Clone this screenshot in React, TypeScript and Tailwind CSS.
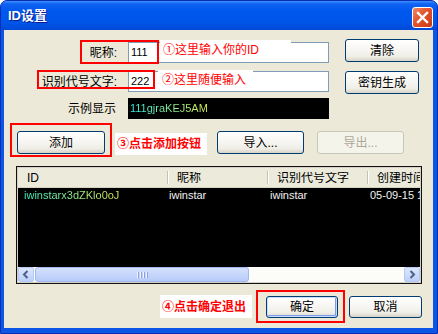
const FONT = "font-['Liberation_Sans','Noto_Sans_CJK_SC',sans-serif]";

type BtnProps = {
  label: string;
  className?: string;
  disabled?: boolean;
  isDefault?: boolean;
};

const XpButton = ({ label, className = '', disabled = false, isDefault = false }: BtnProps) => {
  const look = disabled
    ? 'border-[#C9C7BA] bg-[#F5F4EA] text-[#ACA899]'
    : 'border-[#003C74] text-black bg-[linear-gradient(to_bottom,#FFFFFF_0%,#F7F6F2_45%,#EEEDE6_80%,#D8D2C6_100%)]';
  const ring = isDefault ? 'shadow-[inset_0_0_0_1px_#C9DCFB,inset_-1px_-1px_0_1px_#7D9BEA]' : '';
  return (
    <div className={`flex items-center justify-center rounded-[3px] border text-[12px] leading-none ${look} ${ring} ${className}`}>
      {label}
    </div>
  );
};

// red call-out frame drawn over the form
const RedFrame = ({ className }: { className: string }) => (
  <div className={`absolute border-2 border-[#FF0000] pointer-events-none ${className}`} />
);

const Note = ({ text, bold = false, className }: { text: string; bold?: boolean; className: string }) => (
  <div className={`absolute flex items-center bg-white text-[12px] leading-none text-[#FF0000] whitespace-nowrap ${bold ? 'font-bold' : ''} ${className}`}>
    {text}
  </div>
);

const ScrollBtn = ({ dir }: { dir: 'left' | 'right' }) => (
  <div className="w-[16px] h-full rounded-[2px] border border-[#B4C8F6] bg-[linear-gradient(to_bottom,#DCE6FE,#BDCFFA)] flex items-center justify-center">
    <svg width="8" height="9" viewBox="0 0 8 9">
      {dir === 'left' ? (
        <path d="M5.5 1 L2 4.5 L5.5 8" fill="none" stroke="#4D6185" strokeWidth="2" />
      ) : (
        <path d="M2.5 1 L6 4.5 L2.5 8" fill="none" stroke="#4D6185" strokeWidth="2" />
      )}
    </svg>
  </div>
);

const HeaderCell = ({ text, w, last = false }: { text: string; w: string; last?: boolean }) => (
  <div className={`flex items-center h-full shrink-0 ${w}`}>
    <span className="flex-1 pl-[9px] text-[12px] leading-none whitespace-nowrap overflow-hidden">{text}</span>
    {!last && <span className="w-[1px] h-[13px] bg-[#C5C2B2] shadow-[1px_0_0_#FFFFFF]" />}
  </div>
);

export default function App() {
  return (
    <div className={`w-[438px] h-[334px] bg-white ${FONT}`}>
      <div className="w-full h-full flex flex-col rounded-t-[7px] border border-[#0A2DB3] bg-[#0C56E6]">
        {/* title bar */}
        <div className="h-[29px] flex items-start justify-between rounded-t-[6px] bg-[linear-gradient(to_bottom,#3E93FF_0%,#0F62F2_10%,#0058EE_35%,#0055E8_75%,#0048D6_100%)]">
          <span className="mt-[8px] ml-[7px] text-[13px] font-bold leading-none text-white [text-shadow:1px_1px_0_#0A1A8C]">
            ID设置
          </span>
          <div className="mt-[6px] mr-[4px] w-[21px] h-[21px] rounded-[3px] border border-white bg-[linear-gradient(135deg,#F08A68_0%,#E2522B_45%,#C53B16_100%)] flex items-center justify-center">
            <svg width="13" height="13" viewBox="0 0 13 13">
              <path d="M2 2 L11 11 M11 2 L2 11" stroke="white" strokeWidth="2.4" strokeLinecap="square" />
            </svg>
          </div>
        </div>

        {/* body */}
        <div className="ml-[3px] mr-[4px] h-[298px] bg-[#ECE9D8] flex flex-col text-black">
          <div className="flex items-start">
            <div className="w-[325px] flex flex-col">
              <div className="relative mt-[12px] h-[21px] flex items-center">
                <span className="w-[116px] pr-[3px] text-right text-[12px] leading-none">昵称:</span>
                <div className="ml-[8px] w-[201px] h-full border border-[#7F9DB9] bg-white flex items-center pl-[2px] text-[11px]">111</div>
                <RedFrame className="left-[76px] top-[-2px] w-[79px] h-[24px]" />
                <Note text="①这里输入你的ID" className="left-[156px] top-[-2px] w-[131px] h-[20px] pl-[3px]" />
              </div>
              <div className="relative mt-[8px] h-[21px] flex items-center">
                <span className="w-[116px] pr-[3px] text-right text-[12px] leading-none">识别代号文字:</span>
                <div className="ml-[8px] w-[201px] h-full border border-[#7F9DB9] bg-white flex items-center pl-[2px] text-[11px]">222</div>
                <RedFrame className="left-[33px] top-[-1px] w-[118px] h-[19px]" />
                <Note text="②这里随便输入" className="left-[154px] top-[-1px] w-[95px] h-[20px] pl-[4px]" />
              </div>
              <div className="mt-[6px] h-[21px] flex items-center">
                <span className="w-[116px] pr-[4px] text-right text-[12px] leading-none">示例显示</span>
                <div className="ml-[8px] w-[201px] h-full bg-black flex items-center pl-[2px] text-[11px]">
                  <span className="bg-[linear-gradient(to_right,#2EF2EA,#DDF04C)] bg-clip-text text-transparent">111gjraKEJ5AM</span>
                </div>
              </div>
            </div>
            <div className="ml-[16px] flex flex-col">
              <XpButton label="清除" className="mt-[9px] w-[74px] h-[23px]" />
              <XpButton label="密钥生成" className="mt-[9px] w-[74px] h-[23px]" />
            </div>
          </div>

          <div className="relative mt-[12px] h-[23px] flex pl-[13px]">
            <XpButton label="添加" className="w-[88px] h-full" />
            <XpButton label="导入..." className="ml-[112px] w-[87px] h-full" />
            <XpButton label="导出..." disabled className="ml-[13px] w-[87px] h-full" />
            <RedFrame className="left-[6px] top-[-8px] w-[102px] h-[34px]" />
            <Note text="③点击添加按钮" bold className="left-[111px] top-[2px] w-[92px] h-[22px] pl-[2px]" />
          </div>

          {/* list view */}
          <div className="mt-[12px] ml-[12px] w-[406px] h-[118px] border border-[#111111] bg-black">
            <div className="w-full h-full border border-[#D4D0C8] flex flex-col overflow-hidden">
              <div className="h-[20px] shrink-0 flex bg-[#EBEADB] border-b border-[#D6D2C2]">
                <HeaderCell text="ID" w="w-[150px]" />
                <HeaderCell text="昵称" w="w-[100px]" />
                <HeaderCell text="识别代号文字" w="w-[100px]" />
                <HeaderCell text="创建时间" w="w-[52px]" last />
              </div>
              <div className="flex-1 bg-black text-[11px] leading-none">
                <div className="h-[15px] flex items-center whitespace-nowrap">
                  <div className="w-[150px] pl-[6px]">
                    <span className="bg-[linear-gradient(to_right,#3CF8C8,#E4EE58)] bg-clip-text text-transparent">iwinstarx3dZKlo0oJ</span>
                  </div>
                  <div className="w-[100px] pl-[1px] text-[#F2F2F2]">iwinstar</div>
                  <div className="w-[100px] pl-[2px] text-[#F2F2F2]">iwinstar</div>
                  <div className="w-[52px] pl-[2px] text-[#F2F2F2] overflow-hidden">05-09-15 13:20</div>
                </div>
              </div>
              <div className="h-[15px] shrink-0 flex bg-[#FCFCF9]">
                <ScrollBtn dir="left" />
                <div className="ml-[1px] w-[214px] h-full rounded-[3px] border border-[#9FB6EE] bg-[linear-gradient(to_bottom,#D4E1FE,#B8CBF8)] flex items-center justify-center gap-[1px]">
                  <span className="w-[1px] h-[6px] bg-[#EEF3FF] shadow-[1px_0_0_#8CA5E2]" />
                  <span className="ml-[1px] w-[1px] h-[6px] bg-[#EEF3FF] shadow-[1px_0_0_#8CA5E2]" />
                  <span className="ml-[1px] w-[1px] h-[6px] bg-[#EEF3FF] shadow-[1px_0_0_#8CA5E2]" />
                  <span className="ml-[1px] w-[1px] h-[6px] bg-[#EEF3FF] shadow-[1px_0_0_#8CA5E2]" />
                </div>
                <div className="flex-1" />
                <ScrollBtn dir="right" />
              </div>
            </div>
          </div>

          <div className="relative mt-[12px] h-[22px] flex justify-end gap-[11px] pr-[11px]">
            <Note text="④点击确定退出" bold className="left-[156px] top-[-1px] w-[92px] h-[23px] pl-[2px]" />
            <XpButton label="确定" isDefault className="w-[72px] h-full" />
            <XpButton label="取消" className="w-[73px] h-full" />
            <RedFrame className="left-[252px] top-[-6px] w-[89px] h-[33px]" />
          </div>
        </div>
      </div>
    </div>
  );
}
